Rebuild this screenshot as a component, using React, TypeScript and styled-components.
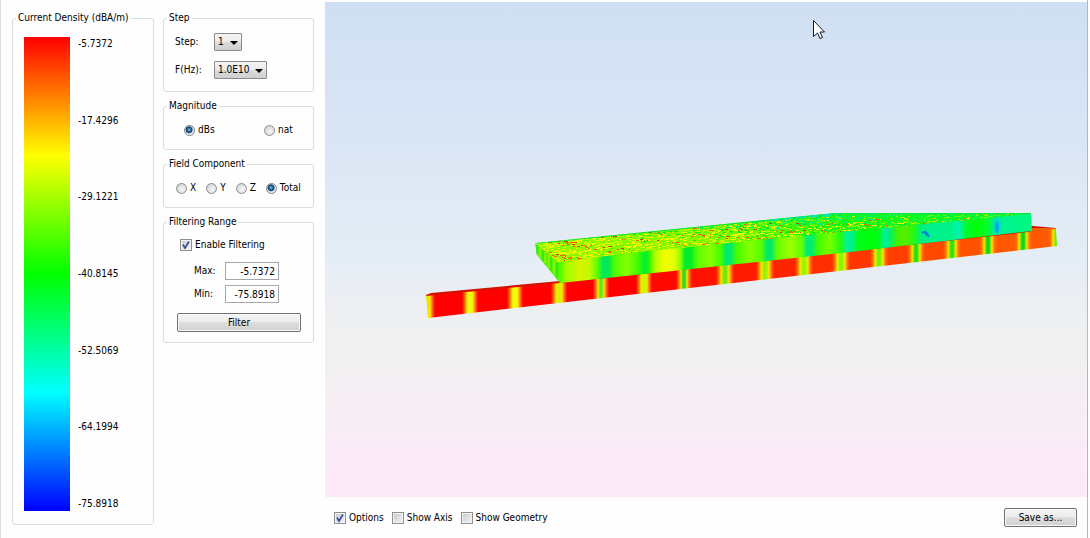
import React from "react";
import styled, { createGlobalStyle } from "styled-components";

const GlobalStyle = createGlobalStyle`
  *, *::before, *::after { box-sizing: border-box; }
  body {
    margin: 0;
    background: #fefefe;
    color: #000;
    font-family: "DejaVu Sans Condensed", Tahoma, sans-serif;
    font-size: 10px;
    line-height: 14px;
  }
  input, select, button { font: inherit; color: inherit; margin: 0; }
`;

const Window = styled.div`
  display: flex;
  min-height: 100vh;
  margin-right: 2px;
  border-left: 1px solid #dcdcdc;
  border-right: 1px solid #b4b8bc;
`;

const Sidebar = styled.aside`
  display: flex;
  gap: 9px;
  padding: 11px 11px 13px;
`;

const Stack = styled.div`
  display: flex;
  flex-direction: column;
  gap: 7px;
  width: 151px;
`;

const Group = styled.fieldset`
  min-width: 0;
  margin: 0;
  padding: 0;
  border: 1px solid #d5dfe2;
  border-radius: 3px;
`;

const Legend = styled.legend`
  margin-left: 3px;
  padding: 0 2px;
  white-space: nowrap;
`;

const GroupBody = styled.div<{ $pad: string }>`
  padding: ${(p) => p.$pad};
`;

const ScaleGroup = styled(Group)`
  display: flex;
  width: 142px;
`;

const ScaleBody = styled.div`
  display: flex;
  flex: 1;
  gap: 8px;
  padding: 12px 10px 13px 11px;
`;

const Ramp = styled.div`
  width: 46px;
  background: linear-gradient(#f00, #ff0 25%, #0f0 50%, #0ff 75%, #00f);
`;

const RampLabels = styled.div`
  display: flex;
  flex-direction: column;
  justify-content: space-between;
`;

const Form = styled.div<{ $label: number; $gap: number }>`
  display: grid;
  grid-template-columns: ${(p) => p.$label}px max-content;
  row-gap: ${(p) => p.$gap}px;
  align-items: center;
  justify-items: start;
`;

const SelectBox = styled.span`
  position: relative;
  display: inline-flex;
  &::after {
    content: "";
    position: absolute;
    right: 4px;
    top: 8px;
    border: 4px solid transparent;
    border-top-color: #000;
    border-bottom: 0;
    pointer-events: none;
  }
`;

const Select = styled.select<{ $width: number }>`
  appearance: none;
  width: ${(p) => p.$width}px;
  height: 18px;
  padding: 0 3px;
  border: 1px solid #8a8a8a;
  border-radius: 1px;
  background: linear-gradient(#f2f2f2, #ebebeb 50%, #dcdcdc 50%, #cfcfcf);
`;

const Choices = styled.div<{ $columns?: boolean }>`
  display: ${(p) => (p.$columns ? "grid" : "flex")};
  grid-template-columns: 80px auto;
  gap: ${(p) => (p.$columns ? 0 : 10)}px;
`;

const Choice = styled.label`
  display: flex;
  align-items: center;
  gap: 3px;
  white-space: nowrap;
`;

const Radio = styled.input.attrs({ type: "radio" })`
  appearance: none;
  width: 11px;
  height: 11px;
  border: 1px solid #8e8f8f;
  border-radius: 50%;
  background: radial-gradient(circle at 60% 60%, #f8f8f8, #c9c9c9);
  &:checked {
    border-color: #7d8186;
    background: radial-gradient(circle at 45% 42%, #7ec8ec 0, #1f5d94 2px, #153f6e 3px, #e8eef2 4px);
  }
`;

const TickBox = styled.span`
  position: relative;
  display: inline-flex;
  svg {
    position: absolute;
    inset: 0;
    pointer-events: none;
  }
`;

const Check = styled.input.attrs({ type: "checkbox" })`
  appearance: none;
  width: 12px;
  height: 12px;
  border: 1px solid #8e8f8f;
  background: linear-gradient(135deg, #c4c8cc, #f6f6f6);
  box-shadow: inset 0 0 0 1px #f4f4f4;
  & + svg { display: none; }
  &:checked + svg { display: block; }
`;

const NumberField = styled.input`
  width: 54px;
  height: 18px;
  padding: 0 3px;
  border: 1px solid #a5a7aa;
  border-radius: 0;
  background: #fff;
  text-align: right;
`;

const FilterBody = styled.div`
  display: flex;
  flex-direction: column;
  gap: 10px;
`;

const Inset = styled.div<{ $left: number }>`
  padding-left: ${(p) => p.$left}px;
`;

const Button = styled.button<{ $width?: number }>`
  width: ${(p) => (p.$width ? `${p.$width}px` : "100%")};
  height: 19px;
  padding: 0;
  border: 1px solid #707070;
  border-radius: 2px;
  background: linear-gradient(#f4f4f4, #ececec 50%, #dedede 50%, #d0d0d0);
  box-shadow: inset 0 0 0 1px #f8f8f8;
`;

const Main = styled.main`
  display: flex;
  flex: 1;
  flex-direction: column;
  min-width: 0;
  padding-top: 2px;
`;

const Viewport = styled.section`
  flex: 1;
  display: flex;
  min-height: 300px;
  background: linear-gradient(#cfdff2, #d8e4f5 22%, #dfe9f5 38%, #e5edf5 53%, #edeff2 61%, #f0f0f0 70%, #f7eef5 84%, #fdeaf8 95%);
`;

const Scene = styled.svg`
  display: block;
  flex: 1;
  min-width: 0;
  contain: size;
`;

const Footer = styled.footer`
  display: flex;
  align-items: center;
  justify-content: space-between;
  height: 41px;
  padding: 0 10px 0 9px;
`;

const FooterChoices = styled.div`
  display: flex;
  gap: 8px;
`;

const scale = ["-5.7372", "-17.4296", "-29.1221", "-40.8145", "-52.5069", "-64.1994", "-75.8918"];

type Stop = [x: number, color: string];

/* Colour stops along the lower plate: a hot cell between each pair of cool seams. */
const seams: Stop[] = [
  [427, "#e8e800"], [470, "#e6ff20"], [515, "#f0ff10"], [559, "#d8f000"], [601, "#60e820"], [644, "#c8f800"],
  [684, "#30d820"], [725, "#70e810"], [765, "#98f000"], [804, "#90f800"], [841, "#80f800"], [879, "#70f400"],
  [916, "#20e010"], [952, "#30e010"], [988, "#10d818"], [1023, "#10d818"], [1057, "#60f000"],
];
const plateStops: Stop[] = seams.flatMap(([x, color], i): Stop[] => {
  const hot = (n: number) => `rgb(255, ${Math.max(0, Math.min(88, (n - 4) * 9))}, 0)`;
  const [outer, middle, inner] = i < 7 ? [8, 5, 3] : [9, 6, 4];
  const out: Stop[] = [];
  if (i > 0) out.push([x - outer, hot(i - 1)], [x - middle, "#ff7a00"], [x - inner, "#ffe600"], [x - 1, color]);
  if (i < seams.length - 1) out.push([x + 1, color], [x + inner, "#ffe600"], [x + middle, "#ff7a00"], [x + outer, hot(i)]);
  return out;
});

const slabStops: Stop[] = [
  [558, "#30ff00"], [566, "#a0ff00"], [580, "#d8f400"], [590, "#c0fa00"], [598, "#50ff00"], [603, "#00e860"], [608, "#00e850"],
  [615, "#50ff00"], [627, "#88ff00"], [638, "#40fc00"], [645, "#00ee38"], [649, "#20fa00"], [655, "#b0ff00"], [664, "#f0ff00"],
  [674, "#e8ff00"], [681, "#80ff00"], [685, "#00ec30"], [691, "#00ee28"], [698, "#60ff00"], [710, "#88ff00"], [721, "#40ff00"],
  [726, "#00e868"], [731, "#00ea70"], [736, "#40ff00"], [750, "#88ff00"], [762, "#50ff00"], [767, "#00e870"], [771, "#00e868"],
  [777, "#60ff00"], [790, "#a0ff00"], [802, "#60ff00"], [807, "#00ec78"], [812, "#00ec70"], [818, "#40ff00"], [830, "#78ff00"],
  [841, "#20fc10"], [847, "#00f0a0"], [852, "#00ee88"], [858, "#00ff20"], [870, "#00ff08"], [879, "#00fc20"], [885, "#00f0a0"],
  [890, "#00f070"], [897, "#40f400"], [906, "#58ec00"], [914, "#20fa10"], [921, "#00f080"], [930, "#00f090"], [950, "#00f488"],
  [959, "#00f4b0"], [966, "#00fa30"], [977, "#00ff08"], [988, "#00fc30"], [995, "#00e8a8"], [1003, "#00f490"], [1031, "#00f880"],
];

const Stops = ({ from, to, stops }: { from: number; to: number; stops: Stop[] }) => (
  <>
    {stops.map(([x, color], i) => (
      <stop key={i} offset={(x - from) / (to - from)} stopColor={color} />
    ))}
  </>
);

type Fleck = { x: number; y: number; w: number; color: string };

/* Speckled current pattern over the slab's top face, hotter toward the near left corner. */
const flecks: Fleck[] = (() => {
  let seed = 77;
  const rand = () => {
    seed = (seed * 16807) % 2147483647;
    return seed / 2147483647;
  };
  const out: Fleck[] = [];
  for (let i = 0; i < 2600; i++) {
    const u = rand();
    const v = rand();
    const fx = 558 + 473 * u;
    const fy = 262 - 48 * u;
    const bx = 536 + 299 * u;
    const by = 243 - 30 * u;
    const heat = 1 - u * 1.1 - v * 0.15 + (rand() - 0.5) * 0.7;
    const band = Math.sin(u * 42 + v * 5);
    const pick = rand();
    let color = "#18f400";
    if (heat > 0.3 && band > 0.2 && pick < 0.34) color = pick < 0.12 ? "#c04800" : "#ff6000";
    else if (heat > 0.3) color = pick < 0.7 ? "#ecf800" : "#78fa00";
    else if (heat > 0) color = pick < 0.3 ? "#c8f000" : pick < 0.6 ? "#60ff00" : "#10e820";
    else if (v > 0.55) color = pick < 0.5 ? "#00f080" : "#00f040";
    else color = pick < 0.2 ? "#88f400" : pick < 0.5 ? "#00e838" : "#08fc10";
    out.push({ x: Math.round(fx + (bx - fx) * v), y: Math.round(fy + (by - fy) * v), w: 1 + Math.round(rand() * 3), color });
  }
  return out;
})();

const Model = () => (
  <Scene viewBox="325 2 762 495" role="img" aria-label="Current density on the structure">
    <defs>
      <linearGradient id="plate" gradientUnits="userSpaceOnUse" x1="426" y1="0" x2="1057" y2="0">
        <Stops from={426} to={1057} stops={plateStops} />
      </linearGradient>
      <linearGradient id="slab" gradientUnits="userSpaceOnUse" x1="558" y1="0" x2="1032" y2="0">
        <Stops from={558} to={1032} stops={slabStops} />
      </linearGradient>
      <linearGradient id="top" gradientUnits="userSpaceOnUse" x1="536" y1="0" x2="1032" y2="0">
        <stop offset="0" stopColor="#90f800" />
        <stop offset="0.35" stopColor="#80f800" />
        <stop offset="0.6" stopColor="#20f810" />
        <stop offset="1" stopColor="#00fa50" />
      </linearGradient>
      <clipPath id="topFace">
        <polygon points="536,243 835,213 1031,213 1031,215 558,263" />
      </clipPath>
    </defs>
    <polygon points="426,295 431,293 560,281 1033,226 1056,228 1056,231 560,284 427,298" fill="#d41000" />
    <polygon points="1030,228 1056,228 1056,231 1030,232" fill="#f06000" />
    <polygon points="426,296 560,283 1056,229 1057,246 428,318" fill="url(#plate)" />
    <polygon points="535,243 559,262 560,283 537,255" fill="#58f400" />
    <path d="M540 248V257M545 252V263M549 255V268M554 259V275" stroke="#b8f000" strokeWidth="1" />
    <path d="M537 245V254M543 251V261M551 257V271M557 262V278" stroke="#10e020" strokeWidth="1" />
    <polygon points="536,243 835,213 1031,213 1031,215 558,263" fill="url(#top)" />
    <g clipPath="url(#topFace)">
      {flecks.map((f, i) => (
        <rect key={i} x={f.x} y={f.y} width={f.w} height="1" fill={f.color} />
      ))}
      <path d="M536 243L835 213.500H1031" fill="none" stroke="#00e83c" strokeWidth="1.500" />
      <path d="M770 220L838 214" stroke="#00e8b0" strokeWidth="2" strokeDasharray="9 4" />
    </g>
    <polygon points="558,262 630,253 850,231 1031,214 1032,231 850,252 560,283" fill="url(#slab)" />
    <path d="M922 233q4-4 7 4M925 233l3 3" fill="none" stroke="#0080e0" strokeWidth="2" />
    <ellipse cx="997" cy="227" rx="2" ry="6" fill="#0098e8" />
    <ellipse cx="997" cy="225" rx="4" ry="7" fill="#00c8e8" opacity="0.4" />
    <path d="M813.500 20.500V36.500L817.500 33L820 38.500L822.500 37.500L820 32H824.500Z" fill="#fff" stroke="#10182c" />
  </Scene>
);

const CheckChoice = ({ label, checked = false }: { label: string; checked?: boolean }) => (
  <Choice>
    <TickBox>
      <Check defaultChecked={checked} />
      <svg width="12" height="12" viewBox="0 0 12 12" aria-hidden="true">
        <path d="M3 5.500L5 9L9 2.500" fill="none" stroke="#3c4f9c" strokeWidth="1.700" />
      </svg>
    </TickBox>
    {label}
  </Choice>
);

const RadioChoice = ({ name, label, checked = false }: { name: string; label: string; checked?: boolean }) => (
  <Choice>
    <Radio name={name} defaultChecked={checked} />
    {label}
  </Choice>
);

export default function App() {
  return (
    <>
      <GlobalStyle />
      <Window>
        <Sidebar>
          <ScaleGroup>
            <Legend>Current Density (dBA/m)</Legend>
            <ScaleBody>
              <Ramp />
              <RampLabels>
                {scale.map((value) => (
                  <span key={value}>{value}</span>
                ))}
              </RampLabels>
            </ScaleBody>
          </ScaleGroup>
          <Stack>
            <Group>
              <Legend>Step</Legend>
              <GroupBody $pad="8px 11px 12px">
                <Form $label={39} $gap={10}>
                  <label htmlFor="step">Step:</label>
                  <SelectBox>
                    <Select id="step" $width={28}>
                      <option>1</option>
                    </Select>
                  </SelectBox>
                  <label htmlFor="frequency">F(Hz):</label>
                  <SelectBox>
                    <Select id="frequency" $width={53}>
                      <option>1.0E10</option>
                    </Select>
                  </SelectBox>
                </Form>
              </GroupBody>
            </Group>
            <Group>
              <Legend>Magnitude</Legend>
              <GroupBody $pad="10px 0 12px 20px">
                <Choices $columns>
                  <RadioChoice name="magnitude" label="dBs" checked />
                  <RadioChoice name="magnitude" label="nat" />
                </Choices>
              </GroupBody>
            </Group>
            <Group>
              <Legend>Field Component</Legend>
              <GroupBody $pad="10px 0 12px 12px">
                <Choices>
                  <RadioChoice name="component" label="X" />
                  <RadioChoice name="component" label="Y" />
                  <RadioChoice name="component" label="Z" />
                  <RadioChoice name="component" label="Total" checked />
                </Choices>
              </GroupBody>
            </Group>
            <Group>
              <Legend>Filtering Range</Legend>
              <GroupBody $pad="9px 12px 10px 13px">
                <FilterBody>
                  <Inset $left={3}>
                    <CheckChoice label="Enable Filtering" checked />
                  </Inset>
                  <Inset $left={17}>
                    <Form $label={31} $gap={5}>
                      <label htmlFor="max">Max:</label>
                      <NumberField id="max" defaultValue="-5.7372" />
                      <label htmlFor="min">Min:</label>
                      <NumberField id="min" defaultValue="-75.8918" />
                    </Form>
                  </Inset>
                  <Button type="button">Filter</Button>
                </FilterBody>
              </GroupBody>
            </Group>
          </Stack>
        </Sidebar>
        <Main>
          <Viewport>
            <Model />
          </Viewport>
          <Footer>
            <FooterChoices>
              <CheckChoice label="Options" checked />
              <CheckChoice label="Show Axis" />
              <CheckChoice label="Show Geometry" />
            </FooterChoices>
            <Button type="button" $width={73}>
              Save as...
            </Button>
          </Footer>
        </Main>
      </Window>
    </>
  );
}
